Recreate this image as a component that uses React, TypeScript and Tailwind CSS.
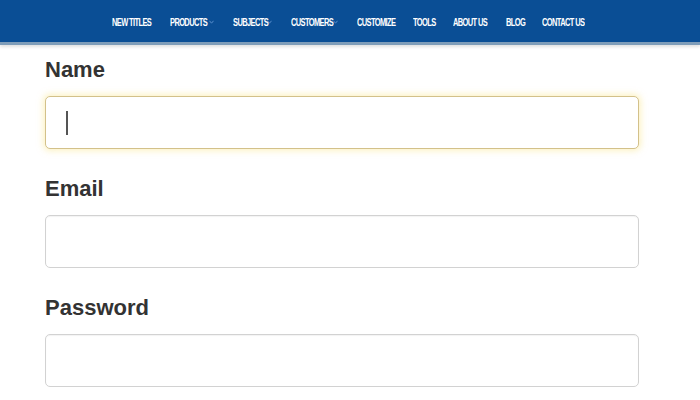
const navItems = [
  { label: "NEW TITLES", w: "w-[39px]", caret: false },
  { label: "PRODUCTS", w: "w-[36px]", caret: true },
  { label: "SUBJECTS", w: "w-[31px]", caret: true },
  { label: "CUSTOMERS", w: "w-[39px]", caret: true },
  { label: "CUSTOMIZE", w: "w-[37px]", caret: false },
  { label: "TOOLS", w: "w-[21px]", caret: false },
  { label: "ABOUT US", w: "w-[34px]", caret: false },
  { label: "BLOG", w: "w-[17px]", caret: false },
  { label: "CONTACT US", w: "w-[41px]", caret: false },
];

function Caret() {
  return (
    <svg className="w-[5px] h-[4px] ml-[3px] mt-[2px]" viewBox="0 0 5 4" fill="none">
      <path d="M0.5 0.8 2.5 3.2 4.5 0.8" stroke="#5f93cf" strokeWidth={0.9} />
    </svg>
  );
}

function Field({ label, focused }: { label: string; focused?: boolean }) {
  return (
    <div className="flex flex-col">
      <label className="text-[22px] leading-[26px] font-bold text-[#333] mb-[13px]">
        {label}
      </label>
      <div
        className={
          focused
            ? "h-[53px] w-[594px] rounded-[5px] bg-white border border-[#d3c18a] shadow-[0_0_6px_2px_rgba(250,232,150,0.55)] flex items-center pl-[20px]"
            : "h-[53px] w-[594px] rounded-[5px] bg-white border border-[#d2d2d2] shadow-[inset_0_1px_1px_rgba(0,0,0,0.05)]"
        }
      >
        {focused && <span className="block w-[1.5px] h-[24px] bg-[#555]" />}
      </div>
    </div>
  );
}

export default function App() {
  return (
    <div className="w-[700px] h-[400px] bg-white overflow-hidden font-['Liberation_Sans',Arial,sans-serif]">
      {/* Top nav */}
      <nav className="h-[45px] bg-[#0a4e95] border-b-[3px] border-[#7f9db9] shadow-[0_2px_3px_rgba(0,0,0,0.12)] flex items-center justify-center gap-[19px] pr-[6px]">
        {navItems.map((item) => (
          <div key={item.label} className="flex items-center">
            <div className={`${item.w} whitespace-nowrap`}>
              <span className="inline-block scale-x-[0.68] origin-left text-white font-bold text-[11px] tracking-[-0.9px]">
                {item.label}
              </span>
            </div>
            {item.caret && <Caret />}
          </div>
        ))}
      </nav>

      {/* Form */}
      <div className="pl-[45px] pt-[12px] flex flex-col gap-[27px]">
        <Field label="Name" focused />
        <Field label="Email" />
        <Field label="Password" />
      </div>
    </div>
  );
}
